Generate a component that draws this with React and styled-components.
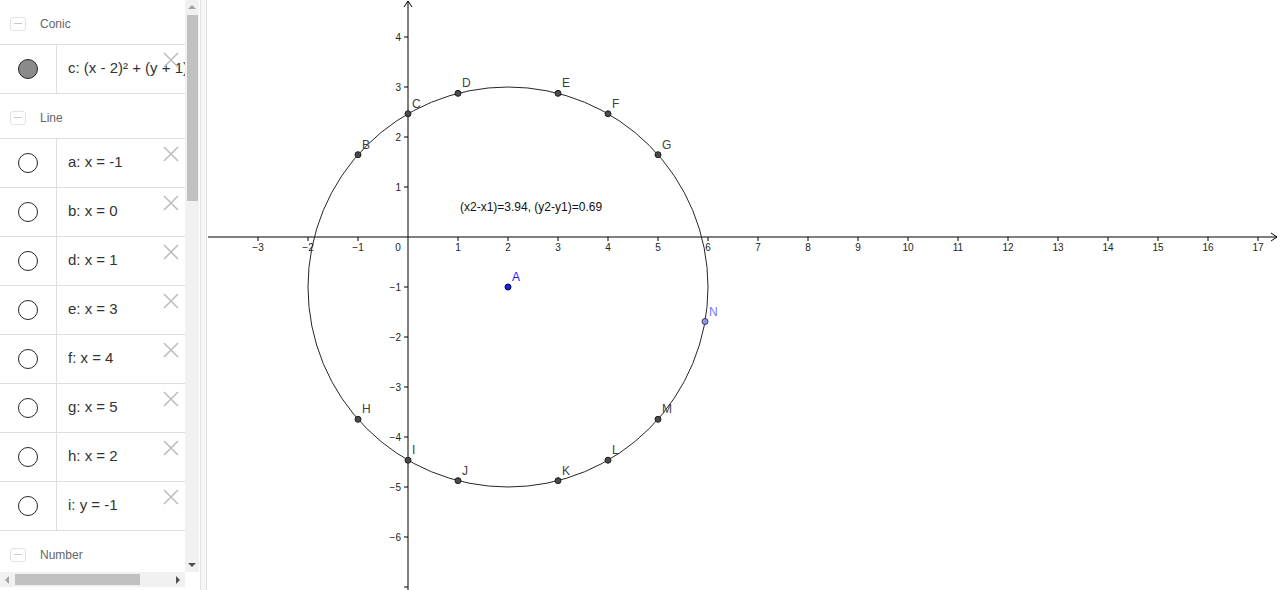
import React from 'react';
import styled, { createGlobalStyle } from 'styled-components';

const GlobalStyle = createGlobalStyle`
  html, body {
    margin: 0;
    padding: 0;
    background: #fff;
  }
  body {
    font-family: "Liberation Sans", Arial, sans-serif;
    overflow: hidden;
  }
`;

const Page = styled.div`
  display: flex;
  width: 1280px;
  height: 590px;
  overflow: hidden;
`;

const AlgebraColumn = styled.div`
  display: flex;
  flex-direction: column;
  width: 199px;
  flex-shrink: 0;
`;

const AlgebraBody = styled.div`
  display: flex;
  height: 572px;
`;

const List = styled.div`
  width: 185px;
  overflow: hidden;
`;

const GroupHeader = styled.div`
  display: flex;
  align-items: center;
  gap: 14px;
  height: 44px;
  box-sizing: border-box;
  padding: 3px 0 0 10px;
  font-size: 12px;
  color: #666;
`;

const Toggle = styled.span`
  display: flex;
  align-items: center;
  justify-content: center;
  width: 16px;
  height: 14px;
  box-sizing: border-box;
  border: 1px solid #e2e2e2;
  border-radius: 3px;

  &::before {
    content: '';
    width: 8px;
    height: 1px;
    background: #c8c8c8;
  }
`;

const RowGroup = styled.div`
  border-bottom: 1px solid #dedede;
`;

const Row = styled.div`
  position: relative;
  display: flex;
  height: 49px;
  box-sizing: border-box;
  border-top: 1px solid #dedede;
`;

const IconCell = styled.div`
  display: flex;
  align-items: center;
  justify-content: center;
  width: 57px;
  box-sizing: border-box;
  border-right: 1px solid #dedede;
  flex-shrink: 0;
`;

const Marble = styled.span`
  width: 20px;
  height: 20px;
  box-sizing: border-box;
  border-radius: 50%;
  border: 1.5px solid #262626;
  background: ${(p) => (p.$filled ? '#8a8a8a' : '#fff')};
`;

const Formula = styled.div`
  display: flex;
  align-items: center;
  flex: 1;
  padding: 0 0 3px 11px;
  font-size: 15px;
  color: #333;
  white-space: nowrap;
  overflow: hidden;
`;

const DeleteButton = styled.span`
  position: absolute;
  top: 7px;
  right: 6px;
  width: 16px;
  height: 16px;
  display: flex;
`;

const VScroll = styled.div`
  display: flex;
  flex-direction: column;
  width: 14px;
  background: #f1f1f1;
`;

const ArrowBox = styled.div`
  display: flex;
  align-items: center;
  justify-content: center;
  width: 14px;
  height: 14px;
  flex-shrink: 0;
`;

const Arrow = styled.span`
  width: 0;
  height: 0;
  border-style: solid;
  ${(p) =>
    p.$dir === 'up'
      ? `border-width: 0 4px 4px 4px; border-color: transparent transparent ${p.$color} transparent;`
      : p.$dir === 'down'
      ? `border-width: 4px 4px 0 4px; border-color: ${p.$color} transparent transparent transparent;`
      : p.$dir === 'left'
      ? `border-width: 4px 4px 4px 0; border-color: transparent ${p.$color} transparent transparent;`
      : `border-width: 4px 0 4px 4px; border-color: transparent transparent transparent ${p.$color};`}
`;

const VThumb = styled.div`
  width: 11px;
  height: 186px;
  margin: 1px 0 0 2px;
  background: #c1c1c1;
`;

const Spacer = styled.div`
  flex: 1;
`;

const HScroll = styled.div`
  display: flex;
  align-items: center;
  width: 185px;
  height: 15px;
  background: #f1f1f1;
`;

const HThumb = styled.div`
  width: 125px;
  height: 11px;
  margin-left: 1px;
  background: #c1c1c1;
`;

const Divider = styled.div`
  width: 7px;
  margin-left: 1px;
  box-sizing: border-box;
  border-left: 1px solid #e2e2e2;
  border-right: 1px solid #e2e2e2;
  background: #f6f6f6;
  flex-shrink: 0;
`;

const Graphics = styled.div`
  flex: 1;
  height: 590px;
  background: #fff;
`;

const Canvas = styled.svg`
  display: block;
  font-family: "Liberation Sans", Arial, sans-serif;
`;

const AxisLabel = styled.text`
  font-size: 10px;
  fill: #222;
`;

const PointLabel = styled.text`
  font-size: 12px;
  fill: ${(p) => p.$color || '#404040'};
`;

const Caption = styled.text`
  font-size: 12px;
  fill: #111;
`;

const conicRow = { icon: true, text: 'c: (x - 2)² + (y + 1)² = 16' };
const lineRows = [
  'a: x = -1',
  'b: x = 0',
  'd: x = 1',
  'e: x = 3',
  'f: x = 4',
  'g: x = 5',
  'h: x = 2',
  'i: y = -1',
];

const CloseIcon = () => (
  <svg width="16" height="16" viewBox="0 0 16 16">
    <path d="M1 1 L15 15 M15 1 L1 15" stroke="#bdbdbd" strokeWidth="1.6" fill="none" />
  </svg>
);

const ItemRow = ({ filled, text }) => (
  <Row>
    <IconCell>
      <Marble $filled={filled} />
    </IconCell>
    <Formula>{text}</Formula>
    <DeleteButton>
      <CloseIcon />
    </DeleteButton>
  </Row>
);

// graph coordinates: origin at (201, 237) in the canvas, 50px per unit
const OX = 201;
const OY = 237;
const U = 50;
const X = (x) => OX + x * U;
const Y = (y) => OY - y * U;
const minus = (n) => (n < 0 ? '\u2212' + Math.abs(n) : String(n));

const onCircle = (x, sign) => sign * Math.sqrt(16 - (x - 2) * (x - 2)) - 1;

const points = [
  ['B', -1, 1], ['C', 0, 1], ['D', 1, 1], ['E', 3, 1], ['F', 4, 1], ['G', 5, 1],
  ['H', -1, -1], ['I', 0, -1], ['J', 1, -1], ['K', 3, -1], ['L', 4, -1], ['M', 5, -1],
].map(([n, x, s]) => ({ n, x, y: onCircle(x, s) }));

const GraphView = () => {
  const xTicks = [];
  for (let i = -3; i <= 17; i++) if (i !== 0) xTicks.push(i);
  const yTicks = [];
  for (let i = -7; i <= 4; i++) if (i !== 0) yTicks.push(i);
  const nx = 5.94;
  const ny = onCircle(nx, -1);

  return (
    <Canvas width="1073" height="590" viewBox="0 0 1073 590">
      {/* axes */}
      <line x1="1" y1={OY} x2="1070" y2={OY} stroke="#000" strokeWidth="1" />
      <path d={`M1064 ${OY - 4} L1070 ${OY} L1064 ${OY + 4}`} stroke="#000" fill="none" />
      <line x1={OX} y1="590" x2={OX} y2="1" stroke="#000" strokeWidth="1" />
      <path d={`M${OX - 4} 7 L${OX} 1 L${OX + 4} 7`} stroke="#000" fill="none" />

      {xTicks.map((i) => (
        <g key={'x' + i}>
          <line x1={X(i)} y1={OY} x2={X(i)} y2={OY + 4} stroke="#000" />
          <AxisLabel x={X(i)} y={OY + 14} textAnchor="middle">{minus(i)}</AxisLabel>
        </g>
      ))}
      {yTicks.map((i) => (
        <g key={'y' + i}>
          <line x1={OX - 4} y1={Y(i)} x2={OX} y2={Y(i)} stroke="#000" />
          {Y(i) < 580 && (
            <AxisLabel x={OX - 7} y={Y(i) + 4} textAnchor="end">{minus(i)}</AxisLabel>
          )}
        </g>
      ))}
      <AxisLabel x={OX - 10} y={OY + 14} textAnchor="middle">0</AxisLabel>

      {/* conic c */}
      <circle cx={X(2)} cy={Y(-1)} r={4 * U} stroke="#262626" strokeWidth="1" fill="none" />

      <Caption x="253" y="211">(x2-x1)=3.94, (y2-y1)=0.69</Caption>

      {points.map((p) => (
        <g key={p.n}>
          <circle cx={X(p.x)} cy={Y(p.y)} r="3" fill="#4a4a4a" stroke="#1e1e1e" strokeWidth="1" />
          <PointLabel x={X(p.x) + 4} y={Y(p.y) - 6}>{p.n}</PointLabel>
        </g>
      ))}

      <circle cx={X(2)} cy={Y(-1)} r="3" fill="#1f1fe6" stroke="#000040" strokeWidth="1" />
      <PointLabel $color="#1a1aff" x={X(2) + 4} y={Y(-1) - 6}>A</PointLabel>

      <circle cx={X(nx)} cy={Y(ny)} r="3" fill="#9393ef" stroke="#3c3c60" strokeWidth="1" />
      <PointLabel $color="#7575ff" x={X(nx) + 4} y={Y(ny) - 6}>N</PointLabel>
    </Canvas>
  );
};

const App = () => (
  <>
    <GlobalStyle />
    <Page>
      <AlgebraColumn>
        <AlgebraBody>
          <List>
            <GroupHeader>
              <Toggle />
              Conic
            </GroupHeader>
            <RowGroup>
              <ItemRow filled={conicRow.icon} text={conicRow.text} />
            </RowGroup>
            <GroupHeader>
              <Toggle />
              Line
            </GroupHeader>
            <RowGroup>
              {lineRows.map((t) => (
                <ItemRow key={t} text={t} />
              ))}
            </RowGroup>
            <GroupHeader>
              <Toggle />
              Number
            </GroupHeader>
          </List>
          <VScroll>
            <ArrowBox>
              <Arrow $dir="up" $color="#a3a3a3" />
            </ArrowBox>
            <VThumb />
            <Spacer />
            <ArrowBox>
              <Arrow $dir="down" $color="#505050" />
            </ArrowBox>
          </VScroll>
        </AlgebraBody>
        <HScroll>
          <ArrowBox>
            <Arrow $dir="left" $color="#a3a3a3" />
          </ArrowBox>
          <HThumb />
          <Spacer />
          <ArrowBox>
            <Arrow $dir="right" $color="#505050" />
          </ArrowBox>
        </HScroll>
      </AlgebraColumn>
      <Divider />
      <Graphics>
        <GraphView />
      </Graphics>
    </Page>
  </>
);

export default App;
